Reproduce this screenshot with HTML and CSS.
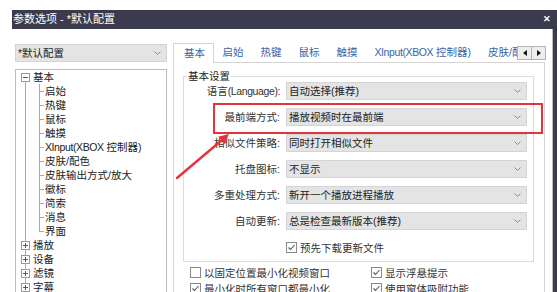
FILE: index.html
```html
<!DOCTYPE html>
<html lang="zh-CN">
<head>
<meta charset="utf-8">
<title>参数选项</title>
<link rel="stylesheet" href="styles.css">
</head>
<body>
<div class="window">
  <div class="titlebar">
    <span class="title">参数选项 - *默认配置</span>
    <span class="close">✕</span>
  </div>
  <div class="content">
    <div class="left">
      <div class="select">
        <span>*默认配置</span>
        <svg class="chev" width="7" height="4" viewBox="0 0 7 4"><polyline points="0.5,0.5 3.5,3.5 6.5,0.5" fill="none" stroke="#8a8a8a" stroke-width="1"/></svg>
      </div>
      <div class="tree">
        <div class="node root open"><span class="exp minus"></span><span>基本</span></div>
        <div class="node child">启始</div>
        <div class="node child">热键</div>
        <div class="node child">鼠标</div>
        <div class="node child">触摸</div>
        <div class="node child"><span class="lat">XInput(XBOX</span>&nbsp;控制器)</div>
        <div class="node child">皮肤/配色</div>
        <div class="node child">皮肤输出方式/放大</div>
        <div class="node child">徽标</div>
        <div class="node child">简索</div>
        <div class="node child">消息</div>
        <div class="node child last">界面</div>
        <div class="node root"><span class="exp plus"></span><span>播放</span></div>
        <div class="node root"><span class="exp plus"></span><span>设备</span></div>
        <div class="node root"><span class="exp plus"></span><span>滤镜</span></div>
        <div class="node root"><span class="exp plus"></span><span>字幕</span></div>
      </div>
    </div>
    <div class="right">
      <div class="tabbar">
        <div class="tabs">
          <span class="tab active">基本</span>
          <span class="tab">启始</span>
          <span class="tab">热键</span>
          <span class="tab">鼠标</span>
          <span class="tab">触摸</span>
          <span class="tab"><span class="lat">XInput(XBOX</span>&nbsp;控制器)</span>
          <span class="tab">皮肤/配色</span>
        </div>
        <div class="tab-scroll">
          <span class="sbtn"><svg width="4" height="6" viewBox="0 0 4 6"><polygon points="4,0 0,3 4,6" fill="#111"/></svg></span>
          <span class="sbtn"><svg width="4" height="6" viewBox="0 0 4 6"><polygon points="0,0 4,3 0,6" fill="#111"/></svg></span>
        </div>
      </div>
      <div class="panel">
        <fieldset class="group">
          <legend>基本设置</legend>
          <div class="form">
            <span class="flabel">语言<span class="lat">(Language):</span></span>
            <div class="select"><span>自动选择(推荐)</span><svg class="chev" width="7" height="4" viewBox="0 0 7 4"><polyline points="0.5,0.5 3.5,3.5 6.5,0.5" fill="none" stroke="#8a8a8a" stroke-width="1"/></svg></div>
            <span class="flabel">最前端方式:</span>
            <div class="select"><span>播放视频时在最前端</span><svg class="chev" width="7" height="4" viewBox="0 0 7 4"><polyline points="0.5,0.5 3.5,3.5 6.5,0.5" fill="none" stroke="#8a8a8a" stroke-width="1"/></svg></div>
            <span class="flabel">相似文件策略:</span>
            <div class="select"><span>同时打开相似文件</span><svg class="chev" width="7" height="4" viewBox="0 0 7 4"><polyline points="0.5,0.5 3.5,3.5 6.5,0.5" fill="none" stroke="#8a8a8a" stroke-width="1"/></svg></div>
            <span class="flabel">托盘图标:</span>
            <div class="select"><span>不显示</span><svg class="chev" width="7" height="4" viewBox="0 0 7 4"><polyline points="0.5,0.5 3.5,3.5 6.5,0.5" fill="none" stroke="#8a8a8a" stroke-width="1"/></svg></div>
            <span class="flabel">多重处理方式:</span>
            <div class="select"><span>新开一个播放进程播放</span><svg class="chev" width="7" height="4" viewBox="0 0 7 4"><polyline points="0.5,0.5 3.5,3.5 6.5,0.5" fill="none" stroke="#8a8a8a" stroke-width="1"/></svg></div>
            <span class="flabel">自动更新:</span>
            <div class="select"><span>总是检查最新版本(推荐)</span><svg class="chev" width="7" height="4" viewBox="0 0 7 4"><polyline points="0.5,0.5 3.5,3.5 6.5,0.5" fill="none" stroke="#8a8a8a" stroke-width="1"/></svg></div>
            <span></span>
            <div class="check"><span class="box"><svg width="9" height="9" viewBox="0 0 9 9"><polyline points="1.5,4.5 3.5,6.5 7.5,2" fill="none" stroke="#555" stroke-width="1.1"/></svg></span><span>预先下载更新文件</span></div>
          </div>
        </fieldset>
        <div class="options">
          <div class="check"><span class="box"></span><span>以固定位置最小化视频窗口</span></div>
          <div class="check"><span class="box"><svg width="9" height="9" viewBox="0 0 9 9"><polyline points="1.5,4.5 3.5,6.5 7.5,2" fill="none" stroke="#555" stroke-width="1.1"/></svg></span><span>显示浮悬提示</span></div>
          <div class="check"><span class="box"><svg width="9" height="9" viewBox="0 0 9 9"><polyline points="1.5,4.5 3.5,6.5 7.5,2" fill="none" stroke="#555" stroke-width="1.1"/></svg></span><span>最小化时所有窗口都最小化</span></div>
          <div class="check"><span class="box"><svg width="9" height="9" viewBox="0 0 9 9"><polyline points="1.5,4.5 3.5,6.5 7.5,2" fill="none" stroke="#555" stroke-width="1.1"/></svg></span><span>使用窗体吸附功能</span></div>
        </div>
      </div>
    </div>
  </div>
</div>
<div class="highlight"></div>
<svg class="arrow" width="70" height="60" viewBox="0 0 70 60">
  <line x1="7" y1="53" x2="52" y2="15" stroke="#e4333b" stroke-width="2.4" stroke-linecap="round"/>
  <polygon points="59,9 54.6,19.2 48.2,11.8" fill="#e4333b"/>
</svg>
</body>
</html>
```
FILE: styles.css
```css
* { box-sizing: border-box; }
html, body {
  margin: 0;
  height: 292px;
  overflow: hidden;
  background: #fff;
}
body {
  position: relative;
  font-family: "Liberation Sans", "Noto Sans CJK SC", "Noto Sans", sans-serif;
  font-size: 10.5px;
  color: #333;
}
.lat { letter-spacing: -0.4px; }
.window {
  margin: 10px 0 0 12px;
  width: 545px;
}
.titlebar {
  height: 19px;
  background: #3c3b4d;
  color: #fff;
  display: flex;
  align-items: center;
  justify-content: space-between;
  padding: 0 6px 0 1px;
}
.title { font-size: 11px; line-height: 19px; }
.close { font-size: 9px; font-weight: bold; line-height: 19px; }

.content {
  display: flex;
  gap: 6px;
  padding: 14px 0 0 3px;
  height: 263px;
  border-right: 4px solid #3c3b4d;
  box-shadow: inset -1px 0 0 #bcbcbc;
}
.left {
  width: 152px;
  flex: none;
  padding-top: 1px;
  display: flex;
  flex-direction: column;
  gap: 7px;
}
.select {
  height: 18px;
  background: #e4e4e4;
  border: 1px solid #d4d4d4;
  display: flex;
  align-items: center;
  justify-content: space-between;
  padding: 0 5px 0 2px;
  color: #222;
  line-height: 16px;
  white-space: nowrap;
}
.chev { flex: none; }

.tree {
  flex: 1;
  border: 1px solid #bdbdbd;
  color: #222;
}
.node {
  height: 14px;
  line-height: 14px;
  display: flex;
  align-items: center;
  white-space: nowrap;
  background-repeat: no-repeat;
}
.node.root {
  padding-left: 5px;
  background-image: linear-gradient(#a8a8a8, #a8a8a8);
  background-position: 9px 0;
  background-size: 1px 100%;
}
.node.root.open {
  background-position: 9px 8px;
  background-size: 1px 6px;
}
.node.child {
  padding-left: 29px;
  background-image:
    linear-gradient(#a8a8a8, #a8a8a8),
    linear-gradient(#a8a8a8, #a8a8a8),
    linear-gradient(#a8a8a8, #a8a8a8);
  background-position: 9px 0, 23px 0, 23px 7px;
  background-size: 1px 100%, 1px 100%, 5px 1px;
}
.node.child.last {
  background-size: 1px 100%, 1px 8px, 5px 1px;
}
.exp {
  width: 9px;
  height: 9px;
  border: 1px solid #9a9a9a;
  background: #fff;
  margin-right: 3px;
  position: relative;
  flex: none;
}
.exp::before {
  content: "";
  position: absolute;
  left: 1px; top: 3px;
  width: 5px; height: 1px;
  background: #3a5a9a;
}
.exp.plus::after {
  content: "";
  position: absolute;
  left: 3px; top: 1px;
  width: 1px; height: 5px;
  background: #3a5a9a;
}

.right {
  width: 372px;
  flex: none;
}
.tabbar {
  height: 19px;
  display: flex;
  position: relative;
  z-index: 1;
}
.tabs {
  flex: 1;
  min-width: 0;
  display: flex;
  overflow: hidden;
  height: 20px;
}
.tab {
  flex: none;
  padding: 0 8.5px;
  height: 20px;
  line-height: 19px;
  color: #3d62a3;
  white-space: nowrap;
}
.tab.active {
  background: #fff;
  border: 1px solid #d5d5d5;
  border-bottom: none;
  padding: 0 8px 0 10px;
}
.tab-scroll {
  display: flex;
  margin: 3px -1px 0 0;
  flex: none;
}
.sbtn {
  width: 15px;
  height: 14px;
  border: 1px solid #b4b4b4;
  background: #ededed;
  display: flex;
  align-items: center;
  justify-content: center;
}
.sbtn + .sbtn { border-left: none; width: 14px; }

.panel {
  border: 1px solid #d5d5d5;
  height: 240px;
}
.group {
  margin: 7px 10px 0 9px;
  padding: 0 4px 5px 0;
  border: 1px solid #dcdcdc;
  min-width: 0;
}
.group legend {
  font-size: 10.5px;
  line-height: 12px;
  padding: 0 1px;
  margin-left: 3px;
  color: #222;
}
.form {
  display: grid;
  grid-template-columns: 96px 241px;
  column-gap: 6px;
  row-gap: 8px;
  align-items: center;
}
.flabel {
  text-align: right;
  color: #333;
  white-space: nowrap;
  line-height: 18px;
}
.check {
  display: flex;
  align-items: center;
  gap: 3px;
  height: 18px;
  white-space: nowrap;
  color: #333;
}
.box {
  width: 11px;
  height: 11px;
  border: 1px solid #8a8a8a;
  background: #fff;
  display: flex;
  align-items: center;
  justify-content: center;
  flex: none;
}
.options {
  margin-top: 2px;
  padding-left: 16px;
  display: grid;
  grid-template-columns: 181px 1fr;
}
.options .check { height: 16px; }

.highlight {
  position: absolute;
  left: 213px;
  top: 103px;
  width: 330px;
  height: 31px;
  border: 2px solid #e4333b;
}
.arrow {
  position: absolute;
  left: 170px;
  top: 125px;
}
```
